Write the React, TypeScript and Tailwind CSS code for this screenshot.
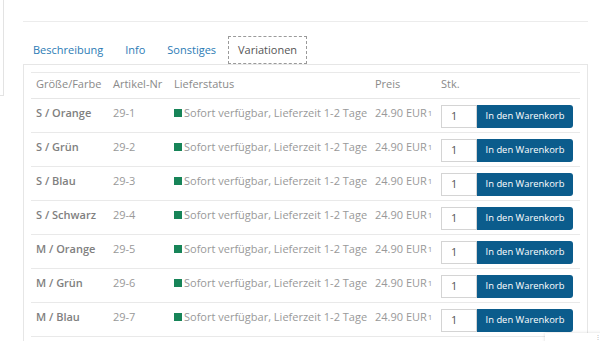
import React from "react";

const rows = [
  { variant: "S / Orange", sku: "29-1" },
  { variant: "S / Grün", sku: "29-2" },
  { variant: "S / Blau", sku: "29-3" },
  { variant: "S / Schwarz", sku: "29-4" },
  { variant: "M / Orange", sku: "29-5" },
  { variant: "M / Grün", sku: "29-6" },
  { variant: "M / Blau", sku: "29-7" },
];

const tabs = ["Beschreibung", "Info", "Sonstiges"];

const cols = "grid grid-cols-[77px_61px_201px_66px_1fr]";

export default function App() {
  return (
    <div
      className="relative w-[600px] h-[341px] overflow-hidden bg-white text-[11px] text-[#999]"
      style={{ fontFamily: '"Open Sans", "Noto Sans", sans-serif' }}
    >
      <div className="flex">
        {/* left sidebar fragment */}
        <div className="w-[4px] h-[96px] border-r border-b border-[#e3e3e3] shrink-0" />

        <div className="ml-[19px] w-[565px]">
          <div className="h-[22px] border-b border-[#ececec]" />

          {/* tabs */}
          <div className="flex gap-[2px] mt-[14px]">
            {tabs.map((t) => (
              <div key={t} className="h-[28px] px-[10px] flex items-center text-[#2b7bb5]">
                {t}
              </div>
            ))}
            <div className="h-[28px] px-[9px] flex items-center text-[#555] border border-dashed border-[#9a9a9a]">
              Variationen
            </div>
          </div>

          {/* panel */}
          <div className="border border-[#e6e6e6] px-[7px] pt-[7px] h-[300px]">
            <div className="border-t border-[#e9e9e9]">
              <div className={`${cols} h-[26px] items-center border-b border-[#e6e6e6] text-[#8a8a8a] whitespace-nowrap`}>
                <div className="px-[5px] -mt-[2px]">Größe/Farbe</div>
                <div className="px-[5px] -mt-[2px]">Artikel-Nr</div>
                <div className="px-[5px] -mt-[2px]">Lieferstatus</div>
                <div className="px-[5px] -mt-[2px]">Preis</div>
                <div className="px-[5px] -mt-[2px]">Stk.</div>
              </div>
              {rows.map((r) => (
                <div key={r.sku} className={`${cols} h-[34px] items-start border-b border-[#e9e9e9]`}>
                  <div className="px-[5px] pt-[6px] leading-[15px] font-semibold text-[#808080] whitespace-nowrap">{r.variant}</div>
                  <div className="px-[5px] pt-[6px] leading-[15px]">{r.sku}</div>
                  <div className="px-[5px] pt-[6px] leading-[15px] flex items-center whitespace-nowrap">
                    <span className="inline-block shrink-0 w-[8px] h-[8px] bg-[#178458] mr-[2px]" />
                    Sofort verfügbar, Lieferzeit 1-2 Tage
                  </div>
                  <div className="px-[5px] pt-[6px] leading-[15px] whitespace-nowrap">
                    24.90 EUR<sup className="text-[8px] relative -top-[1px] ml-[1px]">1</sup>
                  </div>
                  <div className="px-[5px] pt-[6px] flex">
                    <div className="w-[36px] h-[23px] border border-[#d4d4d4] bg-white text-[#555] flex items-center pl-[9px]">
                      1
                    </div>
                    <button className="w-[96px] h-[23px] bg-[#0b5c8c] text-white rounded-r-[3px] text-[9.4px] flex items-center justify-center">
                      In den Warenkorb
                    </button>
                  </div>
                </div>
              ))}
            </div>
          </div>
        </div>
      </div>

      {/* bottom-right floating box */}
      <div className="absolute left-[545px] top-[333px] w-[70px] h-[30px] bg-white shadow-[0_0_3px_rgba(0,0,0,0.15)]">
        <div className="absolute right-[14px] top-[1px] text-[6px] leading-none text-[#aaa]">⋮</div>
      </div>
    </div>
  );
}
